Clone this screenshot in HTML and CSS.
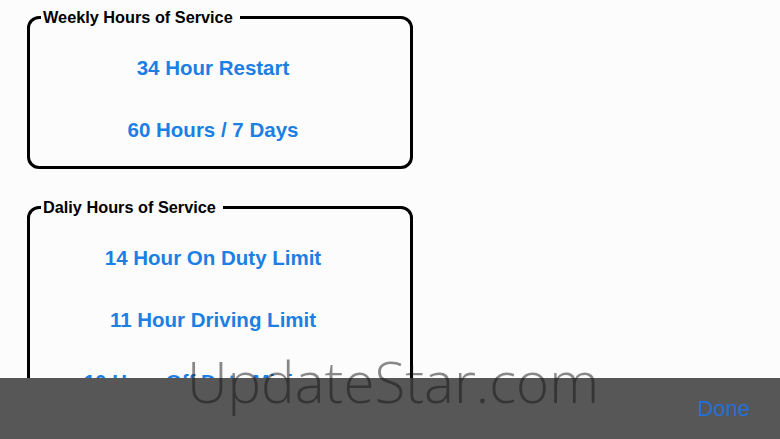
FILE: index.html
```html
<!DOCTYPE html>
<html>
<head>
<meta charset="utf-8">
<link rel="stylesheet" href="styles.css">
</head>
<body>
<main class="page">
  <fieldset class="group">
    <legend class="group-title">Weekly Hours of Service</legend>
    <div class="option">34 Hour Restart</div>
    <div class="option">60 Hours / 7 Days</div>
  </fieldset>
  <fieldset class="group group-daily">
    <legend class="group-title">Daliy Hours of Service</legend>
    <div class="option">14 Hour On Duty Limit</div>
    <div class="option">11 Hour Driving Limit</div>
    <div class="option">10 Hour Off Duty Minimum</div>
  </fieldset>
</main>
<div class="toolbar">
  <span class="done">Done</span>
</div>
<div class="watermark">UpdateStar.com</div>
</body>
</html>
```

FILE: styles.css
```css
html, body {
  margin: 0;
  padding: 0;
  width: 780px;
  height: 439px;
  overflow: hidden;
  background: #fcfcfc;
  font-family: "Liberation Sans", Arial, sans-serif;
}

.page {
  padding: 8px 0 0 27px;
  display: flex;
  flex-direction: column;
  gap: 29px;
}

.group {
  margin: 0;
  box-sizing: border-box;
  width: 386px;
  border: 3px solid #000;
  border-radius: 12px;
  padding: 11px 14px 5px 0;
  min-width: 0;
}

.group-title {
  margin-left: 11px;
  padding: 0 7px 0 2px;
  font-size: 16.3px;
  line-height: 18px;
  font-weight: bold;
  color: #000;
}

.option {
  height: 62px;
  line-height: 62px;
  text-align: center;
  font-size: 20.5px;
  font-weight: bold;
  color: #1b7fe3;
  white-space: nowrap;
}

.toolbar {
  position: absolute;
  left: 0;
  right: 0;
  top: 378px;
  height: 61px;
  background: #575757;
  display: flex;
  align-items: center;
  justify-content: flex-end;
  padding-right: 30px;
}

.done {
  font-size: 22px;
  color: #2370d6;
}

.watermark {
  position: absolute;
  left: 187px;
  top: 342px;
  font-family: "Open Sans", sans-serif;
  font-weight: 300;
  font-size: 56.4px;
  line-height: 80px;
  color: rgba(20, 20, 20, 0.5);
  white-space: nowrap;
}
```
